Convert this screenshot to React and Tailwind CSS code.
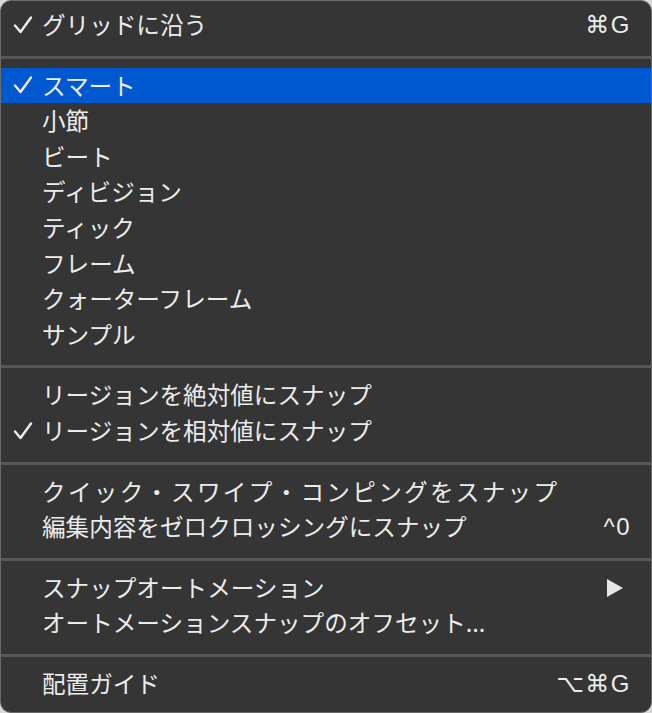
import { Fragment } from 'react'

const GROUPS = [
  [{ label: 'グリッドに沿う', checked: true, shortcut: '⌘G' }],
  [
    { label: 'スマート', checked: true, active: true },
    { label: '小節' },
    { label: 'ビート' },
    { label: 'ディビジョン' },
    { label: 'ティック' },
    { label: 'フレーム' },
    { label: 'クォーターフレーム' },
    { label: 'サンプル' },
  ],
  [
    { label: 'リージョンを絶対値にスナップ' },
    { label: 'リージョンを相対値にスナップ', checked: true },
  ],
  [
    { label: 'クイック・スワイプ・コンピングをスナップ', wide: true },
    { label: '編集内容をゼロクロッシングにスナップ', shortcut: '^0' },
  ],
  [
    { label: 'スナップオートメーション', submenu: true },
    { label: 'オートメーションスナップのオフセット...' },
  ],
  [{ label: '配置ガイド', shortcut: '⌥⌘G' }],
]

function Check() {
  return (
    <svg width="20" height="20" viewBox="0 0 20 20" className="absolute left-[12px] top-1/2 -translate-y-1/2">
      <path d="M2 10.5 L7.5 17 L18 2.5" fill="none" stroke="#ececec" strokeWidth="2.4" strokeLinecap="round" strokeLinejoin="round" />
    </svg>
  )
}

function MenuRow({ item }) {
  return (
    <div
      className={`relative flex items-center h-[35.6px] pl-[41px] pr-[20px] ${item.active ? 'bg-[#0058d0]' : ''}`}
    >
      {item.checked && <Check />}
      <span
        className={`flex-1 text-[23.6px] leading-none text-[#ececec] whitespace-nowrap ${item.wide ? 'tracking-[2.3px]' : ''}`}
      >
        {item.label}
      </span>
      {item.shortcut && (
        <span className="text-[24px] leading-none text-[#ececec] font-['Liberation_Sans','DejaVu_Sans',sans-serif] tracking-[1.5px]">
          {item.shortcut}
        </span>
      )}
      {item.submenu && (
        <svg width="18" height="18" viewBox="0 0 18 18" className="mr-[7px]">
          <path d="M1 0 L17 9 L1 18 Z" fill="#e6e6e6" />
        </svg>
      )}
    </div>
  )
}

export default function App() {
  return (
    <div className="w-[652px] h-[713px] bg-[#d9d9d9] font-['Noto_Sans_CJK_JP',sans-serif]">
      <div className="w-full h-full rounded-[11px] border border-[#6a6a6a] bg-[#353535] pt-[6px] pb-[10px] overflow-hidden">
        {GROUPS.map((group, gi) => (
          <Fragment key={gi}>
            {gi > 0 && (
              <div className="pt-[13px] pb-[9px]">
                <div className="h-[3px] bg-[#575757]" />
              </div>
            )}
            {group.map((item) => (
              <MenuRow key={item.label} item={item} />
            ))}
          </Fragment>
        ))}
      </div>
    </div>
  )
}
